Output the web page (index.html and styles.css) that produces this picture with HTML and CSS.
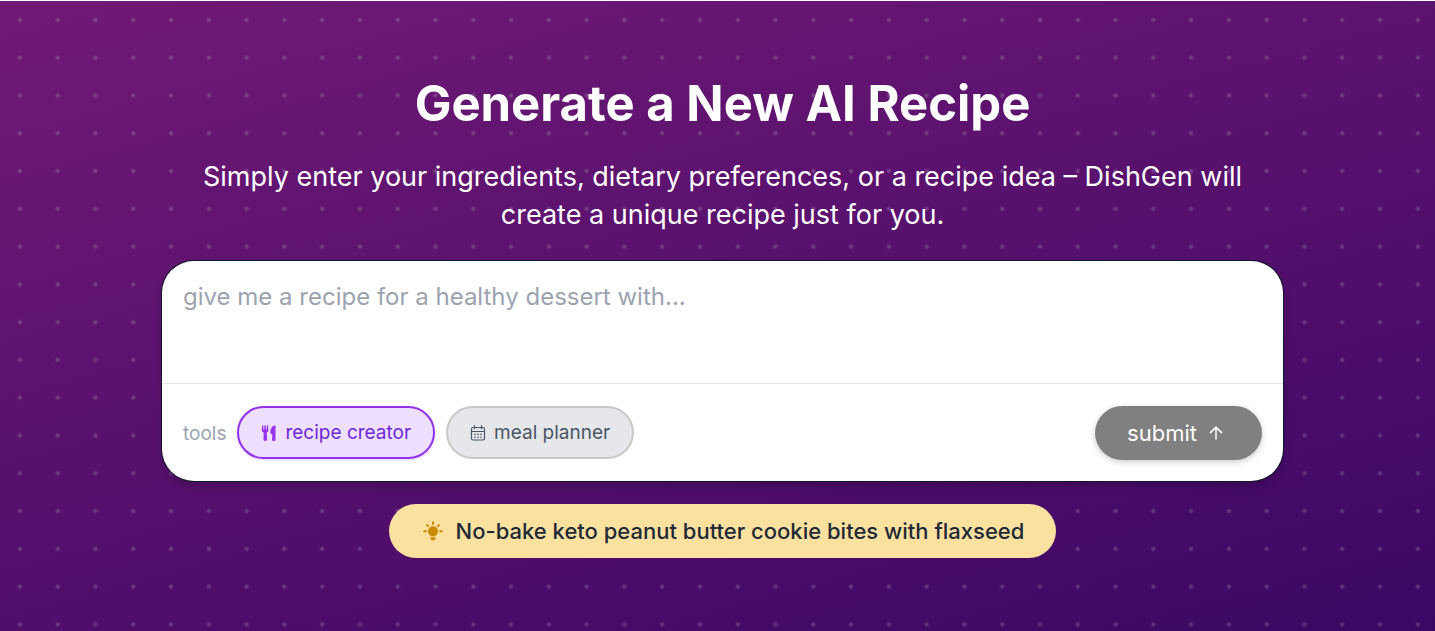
FILE: index.html
```html
<!DOCTYPE html>
<html lang="en">
<head>
<meta charset="utf-8">
<meta name="viewport" content="width=device-width, initial-scale=1">
<title>Generate a New AI Recipe</title>
<link rel="stylesheet" href="styles.css">
</head>
<body>
<main class="hero">
  <h1 class="title">Generate a New AI Recipe</h1>
  <p class="lead">Simply enter your ingredients, dietary preferences, or a recipe idea – DishGen will create a unique recipe just for you.</p>
  <form class="card">
    <textarea class="prompt" aria-label="Recipe idea" placeholder="give me a recipe for a healthy dessert with..."></textarea>
    <div class="toolbar">
      <span class="tools-label">tools</span>
      <button type="button" class="chip chip-active">
        <svg class="icon" viewBox="0 0 16 16" fill="currentColor" aria-hidden="true"><path d="M1.200 0.200h1.100l.2 4.300h.7L3.500.200h1.200l.3 4.300h.7L5.900.200H7l.4 4.500c.1 1.500-.6 2.400-1.600 2.800L6.100 14.600c0 .8-.7 1.400-1.800 1.400s-1.800-.6-1.800-1.400L2.700 7.500C1.400 7.100.700 6.200.800 4.700zM14.500 0.200v14.500c0 .8-.6 1.300-1.700 1.300s-1.700-.5-1.700-1.300l.2-5.200c-1-.3-2-1-2-2.300C9.300 4 11 .7 14.500 .2z"/></svg>
        recipe creator
      </button>
      <button type="button" class="chip">
        <svg class="icon" viewBox="0 0 16 16" fill="none" stroke="currentColor" stroke-width="1.200" stroke-linecap="round" aria-hidden="true"><rect x="1.500" y="2.500" width="13" height="12.500" rx="1.500"/><path d="M1.500 6.500h13M4.500 .7v3M11.500 .7v3"/><path stroke-width="1.600" d="M5 9.400h.01M8 9.400h.01M11 9.400h.01M5 12.200h.01M8 12.200h.01M11 12.200h.01"/></svg>
        meal planner
      </button>
      <button type="submit" class="submit">
        submit
        <svg class="icon" viewBox="0 0 16 16" fill="none" stroke="currentColor" stroke-width="1.500" stroke-linecap="round" stroke-linejoin="round" aria-hidden="true"><path d="M8 14V2.300M2.500 7.600L8 2.100l5.500 5.500"/></svg>
      </button>
    </div>
  </form>
  <button type="button" class="suggestion">
    <svg class="bulb" viewBox="0 0 20 20" aria-hidden="true"><circle cx="10" cy="10.200" r="5" fill="currentColor"/><path fill="currentColor" d="M7.500 13h5v2.200h-5zM7.500 16.300h5v.8c0 1.500-1 2.500-2.500 2.500s-2.500-1-2.500-2.500z"/><path fill="none" stroke="currentColor" stroke-width="2" stroke-linecap="round" d="M10 1.300v1.600M4.100 4.100l.9.900M15.900 4.100l-.9.900M1.200 10.200h1.700M17.100 10.200h1.700"/></svg>
    No-bake keto peanut butter cookie bites with flaxseed
  </button>
</main>
</body>
</html>
```
FILE: styles.css
```css
* {
  box-sizing: border-box;
}

body {
  margin: 0;
  font-family: Inter, "Liberation Sans", sans-serif;
}

button,
textarea {
  font: inherit;
}

.hero {
  display: flex;
  flex-direction: column;
  align-items: center;
  min-height: 100vh;
  padding: 73px 152px 72px 162px;
  border-top: 1px solid #fff;
  background:
    radial-gradient(circle, rgba(255, 255, 255, 0.18) 1px, transparent 3px) 1px 0 / 1cm 1cm,
    linear-gradient(165deg, #701a75, #3b0764);
}

.title {
  margin: 0;
  color: #fff;
  font-size: 49px;
  font-weight: 700;
  line-height: 60px;
  text-align: center;
}

.lead {
  max-width: 1080px;
  margin: 24px 0 27px;
  color: #fff;
  font-size: 27px;
  line-height: 38px;
  text-align: center;
}

.card {
  width: 100%;
  overflow: hidden;
  border-radius: 32px;
  background: #fff;
  box-shadow: 0 0 0 1px #111827, 0 6px 10px rgba(0, 0, 0, 0.15);
}

.prompt {
  display: block;
  width: 100%;
  height: 122px;
  padding: 17px 21px;
  border: 0;
  outline: 0;
  resize: none;
  background: transparent;
  color: #1f2937;
  font-size: 24px;
  line-height: 38px;
}

.prompt::placeholder {
  color: #9ca3af;
}

.toolbar {
  display: flex;
  align-items: center;
  padding: 22px 21px 21px;
  border-top: 1px solid #e5e7eb;
}

.tools-label {
  margin-right: 11px;
  color: #9ca3af;
  font-size: 19px;
}

.chip {
  display: flex;
  align-items: center;
  gap: 8px;
  height: 53px;
  margin: 0 11px 1px 0;
  padding: 0 22px;
  border: 2px solid #c8c8c8;
  border-radius: 27px;
  background: #e5e7eb;
  color: #4b5563;
  font-size: 19px;
}

.chip-active {
  border-color: #9333ea;
  background: #eedfff;
  box-shadow: 0 1px 3px rgba(147, 51, 234, 0.25);
  color: #6d28d9;
}

.chip-active .icon {
  color: #9333ea;
}

.icon {
  width: 16px;
  height: 16px;
}

.submit {
  display: flex;
  align-items: center;
  gap: 11px;
  height: 54px;
  margin-left: auto;
  padding: 0 38px 0 32px;
  border: 0;
  border-radius: 27px;
  background: #808080;
  box-shadow: 0 2px 6px rgba(0, 0, 0, 0.2);
  color: #fff;
  font-size: 22px;
}

.suggestion {
  display: flex;
  align-items: center;
  gap: 13px;
  height: 54px;
  margin-top: 23px;
  padding: 0 32px 0 34px;
  border: 0;
  border-radius: 27px;
  background: #fae19f;
  color: #1f2937;
  font-size: 22px;
  font-weight: 500;
}

.bulb {
  width: 20px;
  height: 20px;
  color: #ca8a04;
}
```
